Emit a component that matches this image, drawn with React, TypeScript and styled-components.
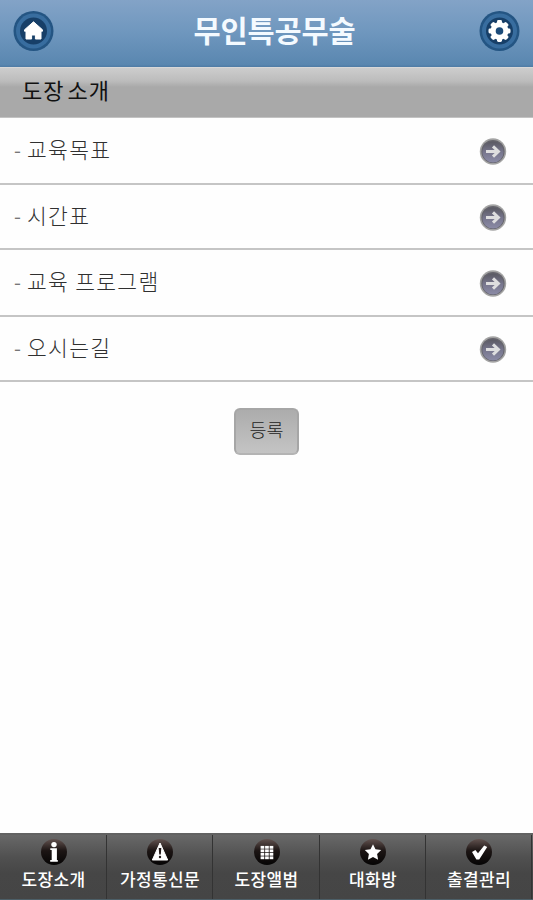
import React from 'react';
import styled, { createGlobalStyle } from 'styled-components';

const Global = createGlobalStyle`
  * { box-sizing: border-box; }
  body { margin: 0; background: #fefefe; font-family: "Noto Sans CJK KR", sans-serif; }
`;

const Page = styled.div`
  width: 533px;
  height: 900px;
  display: flex;
  flex-direction: column;
  overflow: hidden;
`;

const Header = styled.header`
  height: 67px;
  flex: none;
  display: flex;
  align-items: flex-start;
  justify-content: space-between;
  padding: 10px 13px 0 13px;
  background: linear-gradient(#83a3c7 0%, #6f97be 48%, #5a87b0 96%, #4f7ba5 100%);
`;

const Title = styled.h1`
  margin: 0;
  padding-left: 16px;
  font-size: 29.5px;
  line-height: 38px;
  font-weight: 700;
  letter-spacing: -0.1px;
  color: #f4faff;
  white-space: nowrap;
`;

const RoundButton = styled.button`
  width: 41px;
  height: 42px;
  padding: 0;
  border: 0;
  background: none;
  svg { display: block; }
`;

const SectionTitle = styled.h2`
  margin: 0;
  height: 51px;
  flex: none;
  padding: 0 0 0 22px;
  font-size: 22px;
  line-height: 43px;
  font-weight: 400;
  letter-spacing: 1px;
  word-spacing: -3px;
  color: #111;
  border-top: 1px solid #d8d8d8;
  border-bottom: 1px solid #c3c3c3;
  background: linear-gradient(#cdcdcd 0, #bcbcbc 13px, #a9a9a9 19px, #a9a9a9 100%);
`;

const List = styled.ul`
  margin: 0;
  padding: 0;
  list-style: none;
  flex: none;
`;

const Row = styled.li<{ $h: number }>`
  height: ${(p) => p.$h}px;
  display: flex;
  align-items: center;
  justify-content: space-between;
  padding: 0 26px 0 14px;
  border-bottom: 2px solid #c5c5c5;
`;

const Label = styled.span`
  display: flex;
  align-items: center;
  font-size: 21.5px;
  line-height: 30px;
  font-weight: 300;
  letter-spacing: 1.3px;
  color: #303030;
  padding-bottom: 4px;
  white-space: pre;
`;

const Dash = styled.span`
  width: 13px;
  padding-top: 2px;
  color: #777;
  font-size: 20px;
  font-weight: 400;
`;

const Content = styled.div`
  flex: 1;
  display: flex;
  justify-content: center;
  align-items: flex-start;
  padding-top: 26px;
`;

const Submit = styled.button`
  width: 65px;
  height: 47px;
  padding: 0 0 6px;
  border: 2px solid #a6a6a6;
  border-bottom-color: #b4b4b4;
  border-radius: 6px;
  background: linear-gradient(#acacac, #c4c4c4);
  font: 300 18.5px "Noto Sans CJK KR", sans-serif;
  color: #222;
`;

const Nav = styled.nav`
  height: 67px;
  flex: none;
  display: grid;
  grid-template-columns: 107px 106px 107px 106px 106px;
  border-top: 2px solid #626262;
  border-bottom: 1px solid #4c5f68;
  background: linear-gradient(#686868 0%, #505050 35%, #464646 60%, #454545 100%);
`;

const Tab = styled.a`
  display: flex;
  flex-direction: column;
  align-items: center;
  padding: 3px 0 0 1px;
  border-right: 1px solid #333;
  color: #fff;
  font-size: 17px;
  line-height: 26px;
  font-weight: 500;
  letter-spacing: 0.4px;
  white-space: nowrap;
  svg { display: block; }
`;

const Badge = ({ children }: { children: React.ReactNode }) => (
  <svg width="41" height="42" viewBox="0 0 41 42">
    <circle cx="20.5" cy="21" r="20" fill="#245583" />
    <circle cx="20.5" cy="21" r="17.5" fill="#386d9f" />
    <circle cx="20.5" cy="21" r="13.5" fill="#173f68" />
    {children}
  </svg>
);

const Home = () => (
  <Badge>
    <path
      d="M20.5 11.8 11.5 19.8V21.2H13V29h5.6v-4h3.8v4H28v-7.8h1.5v-1.4Z"
      fill="#fff"
      stroke="#fff"
      strokeWidth="1"
      strokeLinejoin="round"
    />
  </Badge>
);

const Gear = () => (
  <Badge>
    <g fill="#fff">
      <circle cx="20.5" cy="21" r="9" />
      {[0, 45, 90, 135, 180, 225, 270, 315].map((a) => (
        <rect key={a} x="18" y="10" width="5" height="6" rx="1.4" transform={`rotate(${a} 20.5 21)`} />
      ))}
    </g>
    <circle cx="20.5" cy="21" r="3.8" fill="#1c4b79" />
  </Badge>
);

const Arrow = () => (
  <svg width="28" height="28" viewBox="0 0 28 28">
    <defs>
      <linearGradient id="arrowFill" x1="0" y1="0" x2="0" y2="1">
        <stop offset="0" stopColor="#5a5962" />
        <stop offset="0.5" stopColor="#77768d" />
        <stop offset="1" stopColor="#8b8ba6" />
      </linearGradient>
    </defs>
    <circle cx="14" cy="14.5" r="13.2" fill="#a3a3a3" />
    <circle cx="14" cy="14.5" r="11.6" fill="#65646c" />
    <circle cx="14" cy="15" r="10.6" fill="url(#arrowFill)" />
    <path d="M7 14.5h12M14 9.3l5.4 5.2-5.4 5.2" fill="none" stroke="#dededf" strokeWidth="3" />
  </svg>
);

const Orb = ({ children }: { children: React.ReactNode }) => (
  <svg width="28" height="28" viewBox="0 0 28 28">
    <defs>
      <linearGradient id="orbFill" x1="0" y1="0" x2="0" y2="1">
        <stop offset="0" stopColor="#62524f" />
        <stop offset="0.45" stopColor="#1c1514" />
        <stop offset="1" stopColor="#050404" />
      </linearGradient>
    </defs>
    <circle cx="14" cy="14" r="13" fill="url(#orbFill)" />
    {children}
  </svg>
);

const tabs = [
  {
    name: '도장소개',
    icon: (
      <g fill="#fff">
        <circle cx="14" cy="6.6" r="2.7" />
        <path d="M10.3 10.3h6.6V22h.9v1.8h-7.6V22h1.5v-9.9h-1.4Z" />
      </g>
    ),
  },
  {
    name: '가정통신문',
    icon: (
      <>
        <path d="M14 5 21.7 22H6.3Z" fill="#fff" stroke="#fff" strokeLinejoin="round" />
        <path d="M12.7 10h2.6L14.8 16.5h-1.6Z" fill="#211918" />
        <circle cx="14" cy="19" r="1.2" fill="#211918" />
      </>
    ),
  },
  {
    name: '도장앨범',
    icon: (
      <g fill="#fff">
        {[0, 1, 2, 3].flatMap((y) =>
          [0, 1, 2].map((x) => (
            <rect key={`${x}-${y}`} x={7.6 + x * 4.5} y={7.9 + y * 3.5} width="3.7" height="2.8" />
          )),
        )}
      </g>
    ),
  },
  {
    name: '대화방',
    icon: <path d="m14 6.3 2.5 5 5.7.7-4.1 4 1 5.7L14 19l-5.1 2.7 1-5.7-4.1-4 5.7-.7Z" fill="#fff" />,
  },
  {
    name: '출결관리',
    icon: <path d="M7 14l3.4-2 2.6 3.3 6.2-7.8 3 1.6-8 12.4h-2.8Z" fill="#fff" />,
  },
];

const rows = [
  { text: '교육목표', h: 67 },
  { text: '시간표', h: 65 },
  { text: '교육 프로그램', h: 67 },
  { text: '오시는길', h: 65 },
];

export default function App() {
  return (
    <Page>
      <Global />
      <Header>
        <RoundButton aria-label="홈"><Home /></RoundButton>
        <Title>무인특공무술</Title>
        <RoundButton aria-label="설정"><Gear /></RoundButton>
      </Header>
      <SectionTitle>도장 소개</SectionTitle>
      <List>
        {rows.map((r) => (
          <Row key={r.text} $h={r.h}>
            <Label><Dash>-</Dash>{r.text}</Label>
            <Arrow />
          </Row>
        ))}
      </List>
      <Content>
        <Submit>등록</Submit>
      </Content>
      <Nav>
        {tabs.map((t) => (
          <Tab key={t.name}>
            <Orb>{t.icon}</Orb>
            {t.name}
          </Tab>
        ))}
      </Nav>
    </Page>
  );
}
